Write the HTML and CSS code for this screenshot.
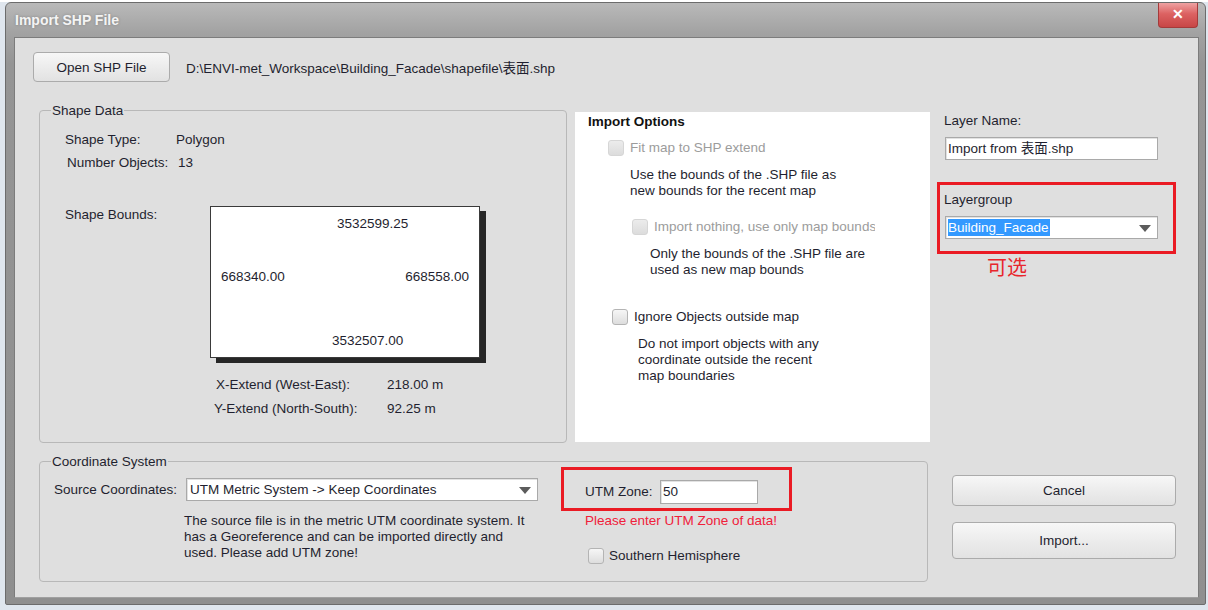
FILE: index.html
```html
<!DOCTYPE html>
<html>
<head>
<meta charset="utf-8">
<link rel="stylesheet" href="styles.css">
</head>
<body>
 <div class="window">
   <div class="titlebar">
     <span class="title">Import SHP File</span>
     <span class="close">&#x2715;</span>
   </div>

   <div class="client">
     <div class="file-row">
       <button class="btn btn-open">Open SHP File</button>
       <span class="path">D:\ENVI-met_Workspace\Building_Facade\shapefile\表面.shp</span>
     </div>

     <div class="row-top">
       <!-- Shape data -->
       <div class="group shape-group">
         <span class="legend">Shape Data</span>
         <div class="info-row"><span class="info-label">Shape Type:</span><span>Polygon</span></div>
         <div class="info-row info-shift"><span class="info-label">Number Objects:</span><span>13</span></div>
         <div class="bounds-row">
           <span class="bounds-label">Shape Bounds:</span>
           <div class="bounds-box">
             <span class="b-north">3532599.25</span>
             <span class="b-west">668340.00</span>
             <span class="b-east">668558.00</span>
             <span class="b-south">3532507.00</span>
           </div>
         </div>
         <div class="extent-row x-row"><span class="extent-label">X-Extend (West-East):</span><span>218.00 m</span></div>
         <div class="extent-row y-row"><span class="extent-label">Y-Extend (North-South):</span><span>92.25 m</span></div>
       </div>

       <!-- Import options -->
       <div class="options">
         <div class="options-title">Import Options</div>
         <div class="check-row opt1 disabled"><span class="check"></span><span>Fit map to SHP extend</span></div>
         <div class="desc desc1">Use the bounds of the .SHP file as<br>new bounds for the recent map</div>
         <div class="check-row opt2 disabled"><span class="check"></span><span class="clip">Import nothing, use only map bounds</span></div>
         <div class="desc desc2">Only the bounds of the .SHP file are<br>used as new map bounds</div>
         <div class="check-row opt3"><span class="check"></span><span>Ignore Objects outside map</span></div>
         <div class="desc desc3">Do not import objects with any<br>coordinate outside the recent<br>map boundaries</div>
       </div>

       <!-- Layer -->
       <div class="layer-col">
         <div class="layer-label">Layer Name:</div>
         <div class="input layer-input">Import from 表面.shp</div>
         <div class="mark layer-mark">
           <div class="group-label">Layergroup</div>
           <div class="select layer-select"><span class="selected">Building_Facade</span><span class="arrow"></span></div>
         </div>
         <div class="note">可选</div>
       </div>
     </div>

     <div class="row-bottom">
       <div class="group coord-group">
         <span class="legend">Coordinate System</span>
         <div class="src">
           <div class="src-row">
             <span class="src-label">Source Coordinates:</span>
             <div class="select src-select"><span>UTM Metric System -&gt; Keep Coordinates</span><span class="arrow"></span></div>
           </div>
           <div class="desc src-desc">The source file is in the metric UTM coordinate system. It<br>has a Georeference and can be imported directly and<br>used. Please add UTM zone!</div>
         </div>
         <div class="utm">
           <div class="mark utm-mark">
             <span class="utm-label">UTM Zone:</span>
             <div class="input utm-input">50</div>
           </div>
           <div class="warn">Please enter UTM Zone of data!</div>
           <div class="check-row south"><span class="check"></span><span>Southern Hemisphere</span></div>
         </div>
       </div>
       <div class="actions">
         <button class="btn btn-cancel">Cancel</button>
         <button class="btn btn-import">Import...</button>
       </div>
     </div>
   </div>
 </div>
</body>
</html>
```

FILE: styles.css
```css
* { box-sizing: border-box; }

body {
 margin: 0;
 width: 1208px;
 height: 610px;
 overflow: hidden;
 background: linear-gradient(#ffffff 0, #ffffff 2px, #dfe6ee 2px);
 font-family: "Liberation Sans", Arial, "Noto Sans CJK SC", sans-serif;
 font-size: 13.5px;
 color: #1f1f2f;
}

/* Window frame */
.window {
 margin: 2px 0 0 5px;
 width: 1201px;
 height: 603px;
 background: linear-gradient(#b9b9b9, #a2a2a2 30px, #959595 60px, #8f8f8f);
 border: 1px solid #6c6c6c;
 border-radius: 6px 6px 2px 2px;
 padding: 0 6px 6px 8px;
 display: flex;
 flex-direction: column;
}

.titlebar {
 height: 34px;
 display: flex;
 align-items: flex-start;
}

.title {
 margin: 9px 0 0 1px;
 font-size: 14px;
 font-weight: bold;
 color: #f4f4f4;
 text-shadow: 0 0 3px rgba(0,0,0,0.25);
}

.close {
 margin-left: auto;
 margin-right: 1px;
 width: 40px;
 height: 25px;
 background: linear-gradient(#eea2a2, #dc6262 45%, #c84646);
 border: 1px solid #a43a3a;
 border-top: none;
 border-radius: 0 0 4px 4px;
 color: #fff;
 font-size: 14px;
 font-weight: bold;
 text-align: center;
 line-height: 23px;
}

.client {
 flex: 1;
 background: #dfdfdf;
 border: 1px solid #7c7c7c;
 border-bottom-color: #a0a0a0;
 position: relative;
}

/* Buttons */
.btn {
 font-family: inherit;
 font-size: 13.5px;
 color: #1f1f2f;
 background: linear-gradient(#f7f7f7, #ececec 50%, #e2e2e2);
 border: 1px solid #ababab;
 border-radius: 4px;
 padding: 0;
}

.file-row {
 display: flex;
 align-items: center;
 padding: 14px 0 0 18px;
}

.btn-open { width: 137px; height: 30px; }
.path { margin-left: 16px; }

/* Rows */
.row-top {
 display: flex;
 align-items: flex-start;
 margin: 28px 0 0 24px;
}

.row-bottom {
 display: flex;
 align-items: flex-start;
 margin: 18px 0 0 24px;
}

.group {
 position: relative;
 border: 1px solid #b8b8b8;
 border-radius: 4px;
}

.legend {
 position: absolute;
 top: -8px;
 left: 11px;
 padding: 0 1px;
 line-height: 16px;
 background: #dfdfdf;
}

/* Shape data */
.shape-group {
 width: 528px;
 height: 333px;
 padding: 17px 0 0 25px;
}

.info-row { line-height: 23px; display: flex; }
.info-label { width: 111px; }
.info-shift { padding-left: 2px; }

.bounds-row {
 display: flex;
 margin-top: 32px;
 line-height: 16px;
}

.bounds-label { width: 145px; padding-top: 1px; }

.bounds-box {
 position: relative;
 width: 270px;
 height: 152px;
 background: #fff;
 border: 1px solid #3a3a3a;
 box-shadow: 6px 5px 0 #262626;
}

.bounds-box span { position: absolute; line-height: 16px; }
.b-north { left: 126px; top: 9px; }
.b-west { left: 10px; top: 62px; }
.b-east { right: 10px; top: 62px; }
.b-south { left: 121px; top: 126px; }

.extent-row { display: flex; line-height: 24px; }
.x-row { margin: 15px 0 0 151px; }
.x-row .extent-label { width: 171px; }
.y-row { margin-left: 149px; }
.y-row .extent-label { width: 173px; }

/* Import options */
.options {
 width: 355px;
 height: 330px;
 margin: 2px 0 0 8px;
 background: #fff;
 padding-top: 2px;
 line-height: 16px;
}

.options-title {
 padding-left: 13px;
 font-weight: bold;
 color: #111;
}

.check-row {
 display: flex;
 align-items: center;
 gap: 6px;
 line-height: 16px;
}

.check {
 width: 16px;
 height: 16px;
 flex: none;
 border: 1px solid #b4b4b4;
 border-radius: 3px;
 background: linear-gradient(#f6f6f6, #dddddd);
}

.disabled { color: #9c9c9c; }
.disabled .check {
 border-color: #d6d6d6;
 background: linear-gradient(#ececec, #dcdcdc);
}

.clip {
 width: 221px;
 overflow: hidden;
 white-space: nowrap;
}

.desc { line-height: 16px; }

.opt1 { margin: 10px 0 0 33px; }
.desc1 { margin: 11px 0 0 55px; }
.opt2 { margin: 20px 0 0 57px; }
.desc2 { margin: 11px 0 0 75px; }
.opt3 { margin: 31px 0 0 37px; }
.desc3 { margin: 11px 0 0 63px; }

/* Layer column */
.layer-col {
 width: 239px;
 margin: 3px 0 0 7px;
 line-height: 16px;
}

.layer-label { padding-left: 7px; }

.input, .select {
 height: 23px;
 background: #fff;
 border: 1px solid #a9a9a9;
 box-shadow: inset 1px 1px 0 #e2e2e2;
 line-height: 21px;
 padding-left: 2px;
 white-space: nowrap;
}

.layer-input {
 width: 213px;
 margin: 8px 0 0 8px;
}

.mark { border: 3px solid #ea1b24; }

.layer-mark {
 height: 72px;
 margin-top: 22px;
 padding: 7px 0 0 4px;
}

.select {
 position: relative;
 display: flex;
 align-items: center;
}

.arrow {
 position: absolute;
 right: 6px;
 top: 8px;
 border-left: 6px solid transparent;
 border-right: 6px solid transparent;
 border-top: 7px solid #5c5c5c;
}

.layer-select {
 width: 213px;
 margin: 8px 0 0 1px;
}

.selected {
 background: #3399ff;
 color: #fff;
 line-height: 17px;
 padding-right: 1px;
}

.note {
 margin: 2px 0 0 50px;
 font-size: 20px;
 line-height: 24px;
 color: #e8262c;
}

/* Coordinate system */
.coord-group {
 width: 889px;
 height: 121px;
 display: flex;
 align-items: flex-start;
 padding-left: 14px;
}

.src { margin-top: 16px; }

.src-row { display: flex; line-height: 23px; }
.src-label { width: 132px; }

.src-select {
 width: 352px;
 padding-left: 3px;
}

.src-desc { margin: 12px 0 0 130px; }

.utm {
 margin-left: 23px;
 margin-top: 5px;
 line-height: 16px;
}

.utm-mark {
 width: 231px;
 height: 44px;
 display: flex;
 align-items: center;
 padding: 5px 0 0 21px;
}

.utm-label { width: 75px; }

.utm-input {
 width: 98px;
 height: 24px;
 line-height: 22px;
}

.warn {
 margin: 2px 0 0 24px;
 color: #f0203a;
}

.south {
 margin: 19px 0 0 27px;
 gap: 5px;
}

/* Dialog actions */
.actions {
 margin-left: 24px;
 display: flex;
 flex-direction: column;
}

.btn-cancel { width: 224px; height: 31px; margin-top: 14px; }
.btn-import { width: 224px; height: 37px; margin-top: 16px; }
```
